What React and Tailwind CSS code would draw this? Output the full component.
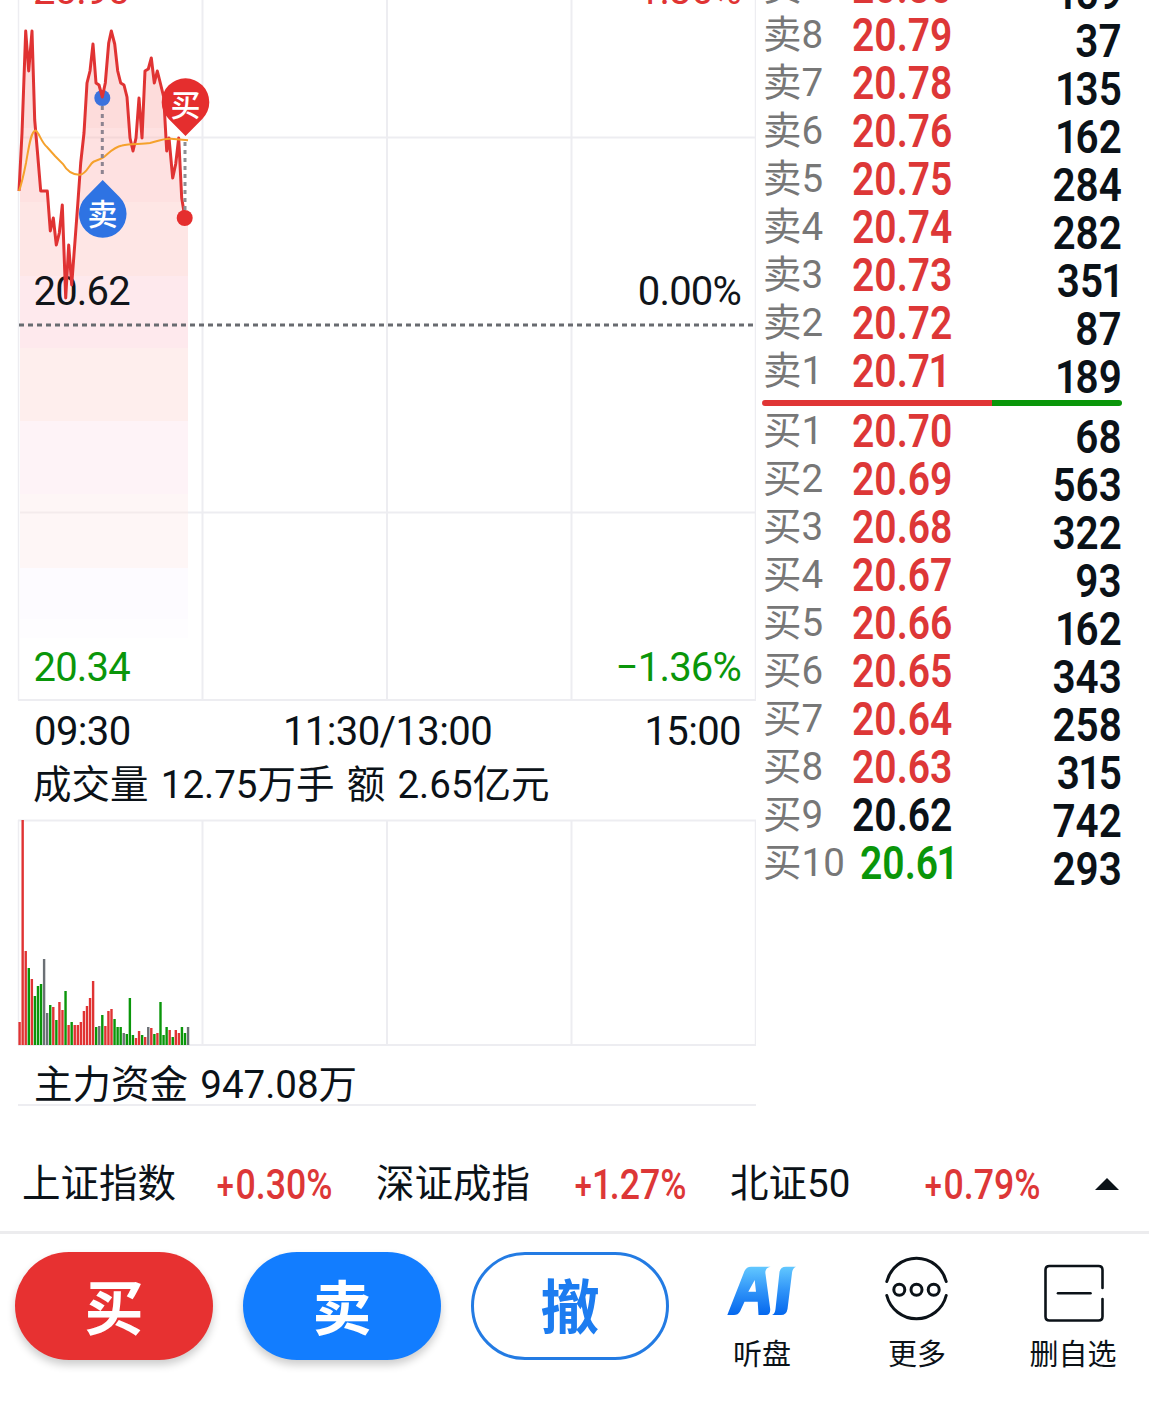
import React from "react";

const RED = "#e03333";
const GREEN = "#0a960a";
const GRAY = "#6b7075";

const asks = [
  ["卖9", "20.80", "159"],
  ["卖8", "20.79", "37"],
  ["卖7", "20.78", "135"],
  ["卖6", "20.76", "162"],
  ["卖5", "20.75", "284"],
  ["卖4", "20.74", "282"],
  ["卖3", "20.73", "351"],
  ["卖2", "20.72", "87"],
  ["卖1", "20.71", "189"],
];

const bids = [
  ["买1", "20.70", "68"],
  ["买2", "20.69", "563"],
  ["买3", "20.68", "322"],
  ["买4", "20.67", "93"],
  ["买5", "20.66", "162"],
  ["买6", "20.65", "343"],
  ["买7", "20.64", "258"],
  ["买8", "20.63", "315"],
  ["买9", "20.62", "742"],
  ["买10", "20.61", "293"],
];

const PREV_CLOSE = 20.62;

const pricePoints = [
  [19, 191], [22, 133], [25.7, 31], [28.7, 71], [32, 31], [34.7, 120], [37.7, 155], [40.7, 191], [47.3, 191],
  [50.3, 231], [53.3, 218], [56.3, 245], [59.3, 233], [62.3, 205], [65.7, 298], [68.7, 245], [71.7, 285],
  [74.7, 245], [77.7, 205], [80.7, 163], [84, 133], [87, 83], [90, 71], [93, 44], [96, 83], [99, 85], [102.3, 97],
  [105.3, 83], [108.7, 43], [111.3, 31], [114.7, 44], [117.7, 71], [120.7, 83], [124, 85], [127, 97], [130, 138],
  [133, 151], [136, 138], [139, 98], [142, 138], [145, 71], [148.3, 69], [151.3, 58], [154.3, 83], [157.3, 71],
  [160.3, 83], [163.7, 97], [166.7, 151], [169, 138], [172.7, 178], [175.7, 164], [178.7, 138], [181.7, 198], [185, 218],
];

const averagePath =
  "M19 191C22 183 24 173 26 163C29 146 31 131 35.5 130.5C39 132 41 142 47 147L55 156L63 164C67 171 73 175 80 174.7C87 174 89 164 94 161.5C99 159.5 101 159 104 157C110 152 114 147 122 145.5C131 143.5 142 144.500 150 143C158 141 163 138.300 171 138.700L188 140.3";

// [top, bottom, colour] of each shade under the price line
const bands = [
  [30, 128, "#fddcdb"],
  [128, 202, "#fee1e1"],
  [202, 276, "#fee6e5"],
  [276, 348, "#fee9ed"],
  [348, 421, "#feeeed"],
  [421, 494, "#fef3f7"],
  [494, 568, "#fef6f6"],
  [568, 619, "#fdfbff"],
  [619, 638, "#fefdff"],
];

const volumes = [
  [23, "r"], [225, "r"], [94, "r"], [77, "g"], [66, "r"], [49, "g"], [59, "g"], [61, "g"], [86, "n"], [32, "n"],
  [40, "g"], [38, "r"], [25, "g"], [43, "r"], [35, "r"], [54, "g"], [20, "r"], [23, "g"], [20, "r"], [20, "r"],
  [23, "r"], [34, "r"], [39, "r"], [47, "r"], [64, "r"], [18, "g"], [19, "n"], [30, "g"], [19, "r"], [34, "r"],
  [36, "r"], [26, "g"], [18, "g"], [18, "g"], [12, "n"], [11, "g"], [47, "g"], [10, "g"], [7, "r"], [14, "r"],
  [10, "g"], [8, "r"], [18, "n"], [17, "r"], [11, "g"], [12, "r"], [43, "g"], [10, "g"], [18, "g"], [15, "r"],
  [8, "g"], [15, "r"], [12, "r"], [18, "g"], [12, "g"], [18, "n"],
];

const barColors = { r: RED, g: GREEN, n: GRAY };

function PriceChart() {
  const line = pricePoints.map((p) => p.join(",")).join(" ");
  return (
    <svg className="block h-[702px] w-[756px]" viewBox="0 0 756 702">
      <defs>
        <clipPath id="area">
          <polygon points={`20,638 20,191 ${line} 188,218 188,638`} />
        </clipPath>
      </defs>
      <g clipPath="url(#area)">
        {bands.map(([top, bottom, color]) => (
          <rect key={top} x="18" y={top} width="171" height={bottom - top} fill={color} />
        ))}
      </g>
      <g stroke="#ededf1" strokeWidth="2">
        <path d="M18.500 0V700M755.500 0V700" strokeWidth="1.500" />
        <path d="M202.500 0V700M387 0V700M571.500 0V700M188 137.500H756M188 512.500H756M18 700H756" />
        <path d="M20 137.500H188M20 512.500H188" stroke="#5a3c50" strokeOpacity="0.06" />
      </g>
      <path d="M19 325H754" stroke="#686b70" strokeWidth="3" strokeDasharray="5 4" />
      <g fontSize="40" fill="#11151a" letterSpacing="-0.8">
        <text x="33" y="4" fill={RED}>20.90</text>
        <text x="741" y="4" fill={RED} textAnchor="end">1.36%</text>
        <text x="33.500" y="304.500">20.62</text>
        <text x="741" y="304.500" textAnchor="end">0.00%</text>
        <text x="33.500" y="680.500" fill={GREEN}>20.34</text>
        <text x="741" y="680.500" fill={GREEN} textAnchor="end">−1.36%</text>
      </g>
      <circle cx="102.300" cy="98" r="8" fill="#3b72dd" />
      <polyline points={line} fill="none" stroke={RED} strokeWidth="3" strokeLinejoin="round" />
      <path d={averagePath} fill="none" stroke="#f5a12c" strokeWidth="2" />
      <path d="M102.300 106V176" stroke="#8d8490" strokeWidth="3" strokeDasharray="4 4" />
      <path d="M185 142V212" stroke="#8d8f94" strokeWidth="3" strokeDasharray="4 4" />
      <circle cx="184.700" cy="218" r="8" fill="#e52e2e" />
      <path d="M102.700 180L119.500 197A23.800 23.800 0 1 1 86 197Z" fill="#2e73e3" />
      <path d="M185.500 136L168.700 119A23.800 23.800 0 1 1 202.300 119Z" fill="#e52e2e" />
      <g fontSize="30" fontWeight="500" fill="#fff" textAnchor="middle">
        <text x="102.500" y="224.500">卖</text>
        <text x="185.500" y="115.500">买</text>
      </g>
    </svg>
  );
}

function VolumeChart() {
  return (
    <svg className="block h-[228px] w-[756px]" viewBox="0 0 756 228">
      <g fill="none" stroke="#ededf1" strokeWidth="2">
        <path d="M18.500 2V227M755.500 2V227" strokeWidth="1.500" />
        <path d="M202.500 2V227M387 2V227M571.500 2V227M18 2.500H756M18 227H756" />
      </g>
      {volumes.map(([height, tone], i) => (
        <rect key={i} x={18.4 + i * 3.063} y={227 - height} width="2.400" height={height} fill={barColors[tone]} />
      ))}
    </svg>
  );
}

// Sets the figure 1 narrower than the other digits
function Figures({ value }) {
  return value.split(/(1)/).map((part, i) =>
    part === "1" ? (
      <span key={i} className="-mr-[3px] -ml-[2px]">
        1
      </span>
    ) : (
      part
    )
  );
}

function BookRow({ row }) {
  const [label, price, amount] = row;
  const value = Number(price);
  const tone = value > PREV_CLOSE ? "text-[#dd3737]" : value < PREV_CLOSE ? "text-[#0a960a]" : "text-[#0b1218]";
  return (
    <div className="flex h-12 items-center whitespace-nowrap">
      <span className={`pl-px text-[38.5px] text-[#777] ${label.length > 2 ? "w-[98px]" : "w-[90px]"}`}>{label}</span>
      <span className={`w-[99px] origin-left scale-x-[.85] text-[46px] font-semibold ${tone}`}>
        <Figures value={price} />
      </span>
      <span className="ml-auto origin-right translate-y-[6px] scale-x-[.88] text-[46px] font-semibold">
        <Figures value={amount} />
      </span>
    </div>
  );
}

function OrderBook() {
  return (
    <div className="w-[360px] shrink-0">
      <div className="-mt-[37px]">
        {asks.map((row) => (
          <BookRow key={row[0]} row={row} />
        ))}
      </div>
      <div className="mt-[5px] mb-[1px] flex h-1.5 overflow-hidden rounded-full">
        <div className="w-[230px] bg-[#e03535]" />
        <div className="flex-1 bg-[#0a960a]" />
      </div>
      {bids.map((row) => (
        <BookRow key={row[0]} row={row} />
      ))}
    </div>
  );
}

function IndexQuote({ name, change, className }) {
  return (
    <div className={`flex items-center justify-between ${className}`}>
      <span className="text-[38.5px]">{name}</span>
      <span className="-ml-8 origin-right scale-x-[.83] text-[43px] font-medium text-[#dd3737]">
        <span className="mr-0.5 text-[37px]">{change[0]}</span>
        <Figures value={change.slice(1)} />
      </span>
    </div>
  );
}

function AiIcon() {
  return (
    <svg className="h-[68px] w-[72px]" viewBox="0 0 72 68">
      <defs>
        <linearGradient id="ai" gradientUnits="userSpaceOnUse" x1="0" y1="8.700" x2="0" y2="57">
          <stop offset="0" stopColor="#62c8ff" />
          <stop offset="0.5" stopColor="#2f93f8" />
          <stop offset="1" stopColor="#0467ee" />
        </linearGradient>
      </defs>
      <path
        d="M1.300 57L18.500 13Q20.500 8.700 25 8.700H44.500Q38.500 10 39.500 16L44.200 51Q44.500 57 40 57H32.500L31.700 43.700H18.500L14 53.500Q12 57 8 57ZM22.300 33.700H30L28.700 22Z"
        fill="url(#ai)"
        fillRule="evenodd"
      />
      <path d="M53.500 14Q54.500 8.700 60 8.700H70Q66.500 10 66 15L61.500 51Q60.500 57 55 57H46Q49 56 49.500 51Z" fill="url(#ai)" />
    </svg>
  );
}

function MoreIcon() {
  return (
    <svg className="h-[68px] w-[72px] overflow-visible" viewBox="0 0 72 68" fill="none" stroke="#0b1218" strokeWidth="3" strokeLinecap="round">
      <path d="M5.800 23.500A30.600 30.600 0 0 1 65.200 23.500M5.800 37.500A30.600 30.600 0 0 0 65.200 37.500" />
      <circle cx="18.300" cy="31.700" r="5.500" />
      <circle cx="35.500" cy="31.700" r="5.500" />
      <circle cx="52.700" cy="31.700" r="5.500" />
    </svg>
  );
}

function RemoveIcon() {
  return (
    <svg className="h-[68px] w-[72px]" viewBox="0 0 72 68" fill="none" stroke="#0b1218" strokeWidth="2.600" strokeLinecap="round">
      <path d="M65.500 30V12Q65.500 8 61.500 8H12.500Q8.500 8 8.500 12V58.500Q8.500 62.500 12.500 62.500H61.500Q65.500 62.500 65.500 58.500V41" />
      <path d="M21 35.300H53.500" />
    </svg>
  );
}

function Tool({ icon, label, className }) {
  return (
    <button className={`flex flex-col items-center pt-1.5 ${className}`}>
      {icon}
      <span className="mt-[5px] text-[29px] leading-[48px] whitespace-nowrap">{label}</span>
    </button>
  );
}

export default function App() {
  return (
    <div className="h-[1426px] w-[1149px] overflow-hidden bg-white font-[Roboto,'Noto_Sans_CJK_SC',sans-serif] leading-none text-[#0b1218]">
      <div className="flex h-[1137px] gap-[6px]">
        <div className="w-[756px] shrink-0">
          <PriceChart />
          <div className="flex h-[58px] items-center justify-between pt-0.5 pr-[15px] pl-[34px] text-[40px] tracking-[-0.6px]">
            <span>09:30</span>
            <span>11:30/13:00</span>
            <span>15:00</span>
          </div>
          <div className="flex h-[58px] items-center pb-[7px] pl-[33px] text-[38.5px] [word-spacing:2.7px] whitespace-nowrap">
            成交量 12.75万手 额 2.65亿元
          </div>
          <VolumeChart />
          <div className="ml-[18px] flex h-[60px] items-end border-b-2 border-[#ededf1] pl-[16px] text-[38.5px] [word-spacing:2.7px]">
            主力资金 947.08万
          </div>
        </div>
        <OrderBook />
      </div>

      <div className="flex h-[97px] items-center border-b-[3px] border-[#ececee] pl-[22px]">
        <IndexQuote name="上证指数" change="+0.30%" className="w-[310px]" />
        <IndexQuote name="深证成指" change="+1.27%" className="ml-[44px] w-[310px]" />
        <IndexQuote name="北证50" change="+0.79%" className="ml-[44px] w-[310px]" />
        <svg className="ml-[55px] h-3 w-6" viewBox="0 0 24 12">
          <path d="M0 12L12 0L24 12Z" fill="#0b1218" />
        </svg>
      </div>

      <div className="flex items-start pt-[18px] pl-[15px]">
        <button className="h-[108px] w-[198px] rounded-full bg-[#e73131] pt-1.5 text-[59px] font-bold text-white shadow-[0_5px_8px_rgba(0,0,0,0.2)]">
          买
        </button>
        <button className="ml-[30px] h-[108px] w-[198px] rounded-full bg-[#127dff] pt-1.5 text-[59px] font-bold text-white shadow-[0_5px_8px_rgba(0,0,0,0.2)]">
          卖
        </button>
        <button className="ml-[30px] h-[108px] w-[198px] rounded-full border-[3px] border-[#237be3] pt-1 text-[59px] font-bold text-[#1c7cf0]">
          撤
        </button>
        <Tool icon={<AiIcon />} label="听盘" className="ml-[57px] w-[72px]" />
        <Tool icon={<MoreIcon />} label="更多" className="ml-[83px] w-[72px]" />
        <Tool icon={<RemoveIcon />} label="删自选" className="ml-[76px] w-[88px]" />
      </div>
    </div>
  );
}
